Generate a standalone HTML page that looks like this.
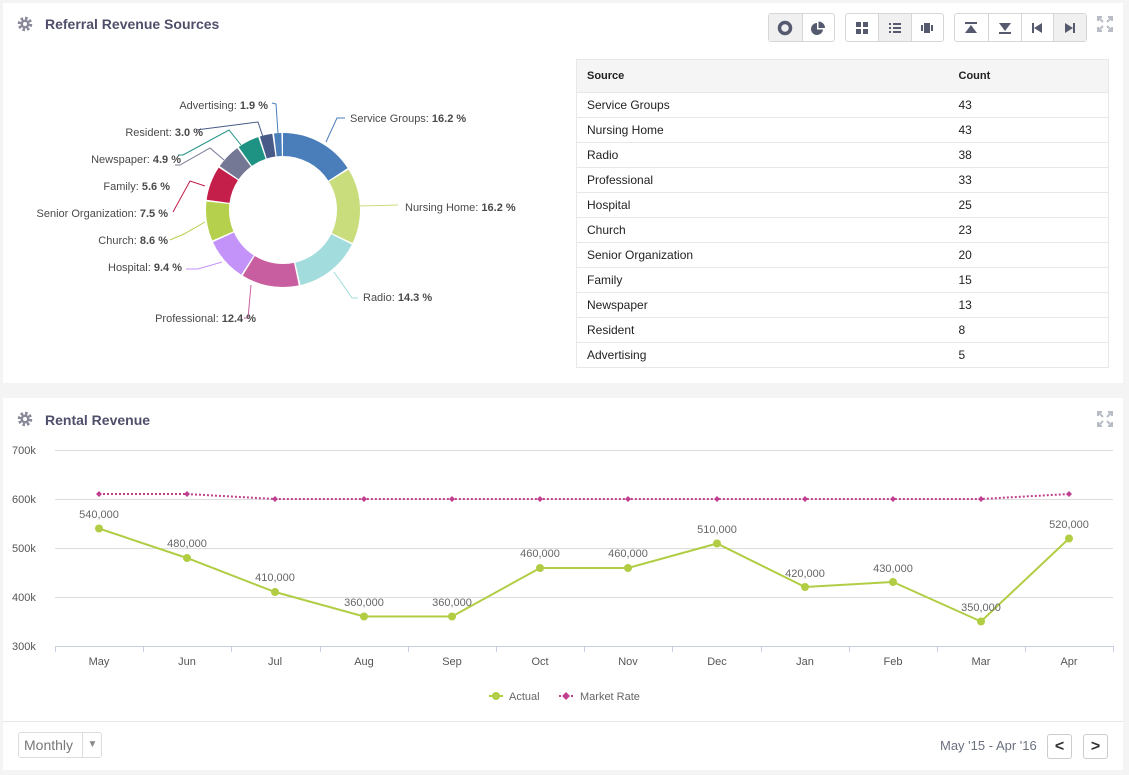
<!DOCTYPE html>
<html><head><meta charset="utf-8"><style>
*{box-sizing:border-box;margin:0;padding:0}
body{width:1129px;height:775px;background:#f4f4f4;font-family:"Liberation Sans",Arial,sans-serif;position:relative;overflow:hidden}
.panel{position:absolute;background:#fff;left:3px;width:1120px}
.title{position:absolute;left:42px;font-size:14px;font-weight:bold;color:#4f4f6b}
.gear{position:absolute;left:14px;width:16px;height:16px}
.btng{position:absolute;top:10px;height:29px;border:1px solid #d6d6d6;border-radius:3px;display:flex;background:#fff}
.btng div{width:33px;border-left:1px solid #d6d6d6;display:flex;align-items:center;justify-content:center}
.btng div:first-child{border-left:none}
.btng .on{background:#f0f0f0}
table{position:absolute;left:576px;top:59px;width:533px;border-collapse:collapse;font-size:12px;color:#222;border:1px solid #e8e8e8}
th{background:#f5f5f5;height:33px;text-align:left;font-size:11px;padding-left:10px;border-bottom:1px solid #e8e8e8}
td{height:25px;padding-left:10px;border-bottom:1px solid #e8e8e8}
</style></head><body>
<div class="panel" style="top:3px;height:380px">
<svg class="gear" style="top:13px" viewBox="0 0 16 16"><circle cx="8" cy="8" r="5.5" fill="none" stroke="#8a8a9a" stroke-width="3.5" stroke-dasharray="2.4 1.9"/><circle cx="8" cy="8" r="4.5" fill="#8a8a9a"/><circle cx="8" cy="8" r="2" fill="#fff"/></svg>
<div class="title" style="top:13px">Referral Revenue Sources</div>
<div class="btng" style="left:765px;width:67px"><div class="on"><svg width="16" height="16"><circle cx="8" cy="8" r="5.5" fill="none" stroke="#555a6e" stroke-width="3.5"/></svg></div><div><svg width="16" height="16"><path d="M8.5 1.5A6.5 6.5 0 0 1 15 8H8.5Z M7 3A6 6 0 1 0 13 9.5H7Z" fill="#555a6e"/></svg></div></div>
<div class="btng" style="left:842px;width:99px"><div><svg width="14" height="14"><rect x="1" y="1" width="5" height="5" fill="#555a6e"/><rect x="8" y="1" width="5" height="5" fill="#555a6e"/><rect x="1" y="8" width="5" height="5" fill="#555a6e"/><rect x="8" y="8" width="5" height="5" fill="#555a6e"/></svg></div><div class="on"><svg width="14" height="14" fill="#555a6e"><rect x="1" y="2" width="2" height="2"/><rect x="5" y="2" width="8" height="2"/><rect x="1" y="6" width="2" height="2"/><rect x="5" y="6" width="8" height="2"/><rect x="1" y="10" width="2" height="2"/><rect x="5" y="10" width="8" height="2"/></svg></div><div><svg width="14" height="14" fill="#555a6e"><rect x="1" y="4" width="2" height="6"/><rect x="4" y="2" width="6" height="10"/><rect x="11" y="4" width="2" height="6"/></svg></div></div>
<div class="btng" style="left:951px;width:133px"><div><svg width="14" height="14" fill="#555a6e"><rect x="1" y="1" width="12" height="2"/><path d="M7 4L13 12H1Z"/></svg></div><div><svg width="14" height="14" fill="#555a6e"><rect x="1" y="11" width="12" height="2"/><path d="M7 10L13 2H1Z"/></svg></div><div><svg width="14" height="14" fill="#555a6e"><rect x="2" y="2" width="2" height="10"/><path d="M4 7L12 2V12Z"/></svg></div><div class="on"><svg width="14" height="14" fill="#555a6e"><rect x="10" y="2" width="2" height="10"/><path d="M10 7L2 2V12Z"/></svg></div></div>
<svg style="position:absolute;left:1094px;top:13px" width="16" height="16" fill="none" stroke="#b8bcc6" stroke-width="2"><path d="M1 5V1H5M11 1H15V5M15 11V15H11M5 15H1V11M2 2L6 6M14 2L10 6M14 14L10 10M2 14L6 10"/></svg>
</div>
<svg style="position:absolute;left:0;top:0" width="570" height="380">
<g transform="rotate(-90 283 210)" fill="none" stroke-width="23">
<circle cx="283" cy="210" r="65.5" stroke="#4a7ebb" stroke-dasharray="65.2 400" stroke-dashoffset="0"/>
<circle cx="283" cy="210" r="65.5" stroke="#c9dd7d" stroke-dasharray="65.2 400" stroke-dashoffset="-66.7"/>
<circle cx="283" cy="210" r="65.5" stroke="#a2dcdc" stroke-dasharray="57.3 400" stroke-dashoffset="-133.3"/>
<circle cx="283" cy="210" r="65.5" stroke="#c85ea0" stroke-dasharray="49.5 400" stroke-dashoffset="-192.2"/>
<circle cx="283" cy="210" r="65.5" stroke="#c493f9" stroke-dasharray="37.2 400" stroke-dashoffset="-243.2"/>
<circle cx="283" cy="210" r="65.5" stroke="#b4d04c" stroke-dasharray="33.9 400" stroke-dashoffset="-281.9"/>
<circle cx="283" cy="210" r="65.5" stroke="#c41e4b" stroke-dasharray="29.4 400" stroke-dashoffset="-317.3"/>
<circle cx="283" cy="210" r="65.5" stroke="#757894" stroke-dasharray="21.5 400" stroke-dashoffset="-348.2"/>
<circle cx="283" cy="210" r="65.5" stroke="#1e9283" stroke-dasharray="18.7 400" stroke-dashoffset="-371.2"/>
<circle cx="283" cy="210" r="65.5" stroke="#475a88" stroke-dasharray="10.8 400" stroke-dashoffset="-391.4"/>
<circle cx="283" cy="210" r="65.5" stroke="#4a7ebb" stroke-dasharray="6.3 400" stroke-dashoffset="-403.7"/>
</g>
<g fill="none" stroke-width="1">
<path d="M326 142L337 118H345" stroke="#4a7ebb"/>
<path d="M360 206L398 205" stroke="#c9dd7d"/>
<path d="M334 272L352 298H358" stroke="#a2dcdc"/>
<path d="M251 285L248 318H244" stroke="#c85ea0"/>
<path d="M222 262L198 269H186" stroke="#c493f9"/>
<path d="M205 222L184 234L170 240" stroke="#b4d04c"/>
<path d="M205 186L190 181L173 212" stroke="#c41e4b"/>
<path d="M224 160L210 148L180 165H175" stroke="#757894"/>
<path d="M241 145L229 130L183 155H178" stroke="#1e9283"/>
<path d="M263 137L258 122L196 130" stroke="#475a88"/>
<path d="M278 133L276 104L272 103" stroke="#4a7ebb"/>
</g>
<g font-size="11" fill="#4a4a4a">
<text x="350" y="122">Service Groups: <tspan font-weight="bold">16.2 %</tspan></text>
<text x="405" y="211">Nursing Home: <tspan font-weight="bold">16.2 %</tspan></text>
<text x="363" y="301">Radio: <tspan font-weight="bold">14.3 %</tspan></text>
<g text-anchor="end">
<text x="256" y="322">Professional: <tspan font-weight="bold">12.4 %</tspan></text>
<text x="182" y="271">Hospital: <tspan font-weight="bold">9.4 %</tspan></text>
<text x="168" y="244">Church: <tspan font-weight="bold">8.6 %</tspan></text>
<text x="168" y="217">Senior Organization: <tspan font-weight="bold">7.5 %</tspan></text>
<text x="170" y="190">Family: <tspan font-weight="bold">5.6 %</tspan></text>
<text x="181" y="163">Newspaper: <tspan font-weight="bold">4.9 %</tspan></text>
<text x="203" y="136">Resident: <tspan font-weight="bold">3.0 %</tspan></text>
<text x="268" y="109">Advertising: <tspan font-weight="bold">1.9 %</tspan></text>
</g></g></svg>
<table>
<tr><th style="width:372px">Source</th><th>Count</th></tr>
<tr><td>Service Groups</td><td>43</td></tr>
<tr><td>Nursing Home</td><td>43</td></tr>
<tr><td>Radio</td><td>38</td></tr>
<tr><td>Professional</td><td>33</td></tr>
<tr><td>Hospital</td><td>25</td></tr>
<tr><td>Church</td><td>23</td></tr>
<tr><td>Senior Organization</td><td>20</td></tr>
<tr><td>Family</td><td>15</td></tr>
<tr><td>Newspaper</td><td>13</td></tr>
<tr><td>Resident</td><td>8</td></tr>
<tr><td>Advertising</td><td>5</td></tr>
</table>

<div class="panel" style="top:398px;height:372px">
<svg class="gear" style="top:13px" viewBox="0 0 16 16"><circle cx="8" cy="8" r="5.5" fill="none" stroke="#8a8a9a" stroke-width="3.5" stroke-dasharray="2.4 1.9"/><circle cx="8" cy="8" r="4.5" fill="#8a8a9a"/><circle cx="8" cy="8" r="2" fill="#fff"/></svg>
<div class="title" style="top:14px">Rental Revenue</div>
<svg style="position:absolute;left:1094px;top:13px" width="16" height="16" fill="none" stroke="#b8bcc6" stroke-width="2"><path d="M1 5V1H5M11 1H15V5M15 11V15H11M5 15H1V11M2 2L6 6M14 2L10 6M14 14L10 10M2 14L6 10"/></svg>
<div style="position:absolute;left:0;top:323px;width:1120px;border-top:1px solid #e6e6e6"></div>
<div style="position:absolute;left:15px;top:334px;width:84px;height:26px;border:1px solid #ddd;border-radius:3px;font-size:14px;color:#777;line-height:24px;padding-left:5px">Monthly<span style="position:absolute;left:63px;top:0;height:24px;border-left:1px solid #ddd;width:20px;text-align:center;font-size:10px;color:#888">▼</span></div>
<div style="position:absolute;left:937px;top:340px;font-size:13px;color:#6a7080">May '15 - Apr '16</div>
<div style="position:absolute;left:1044px;top:336px;width:25px;height:25px;border:1px solid #ccc;border-radius:3px;text-align:center;line-height:23px;font-weight:bold;color:#333">&lt;</div>
<div style="position:absolute;left:1080px;top:336px;width:25px;height:25px;border:1px solid #ccc;border-radius:3px;text-align:center;line-height:23px;font-weight:bold;color:#333">&gt;</div>
</div>
<svg style="position:absolute;left:0;top:440px" width="1129" height="270" font-family="Liberation Sans,Arial,sans-serif">
<g transform="translate(0,-440)">
<g stroke="#dcdcdc"><path d="M55 450.5H1113M55 499.5H1113M55 548.5H1113M55 597.5H1113"/><path d="M55 646.5H1113" stroke="#c8d1e0"/>
<path d="M55.5 646V652M143.5 646V652M231.5 646V652M320.5 646V652M408.5 646V652M496.5 646V652M584.5 646V652M672.5 646V652M761.5 646V652M849.5 646V652M937.5 646V652M1025.5 646V652M1113.5 646V652" stroke="#c8d1e0"/></g>
<g font-size="11" fill="#555"><text x="12" y="454">700k</text><text x="12" y="503">600k</text><text x="12" y="552">500k</text><text x="12" y="601">400k</text><text x="12" y="650">300k</text></g>
<g font-size="11" fill="#555" text-anchor="middle"><text x="99" y="665">May</text><text x="187" y="665">Jun</text><text x="275" y="665">Jul</text><text x="364" y="665">Aug</text><text x="452" y="665">Sep</text><text x="540" y="665">Oct</text><text x="628" y="665">Nov</text><text x="717" y="665">Dec</text><text x="805" y="665">Jan</text><text x="893" y="665">Feb</text><text x="981" y="665">Mar</text><text x="1069" y="665">Apr</text></g>
<polyline fill="none" stroke="#c0408f" stroke-width="2" stroke-dasharray="2 2" points="99,494 187,494 275,499 364,499 452,499 540,499 628,499 717,499 805,499 893,499 981,499 1069,494"/>
<g fill="#c0408f"><path d="M99 491l3 3-3 3-3-3z M187 491l3 3-3 3-3-3z M275 496l3 3-3 3-3-3z M364 496l3 3-3 3-3-3z M452 496l3 3-3 3-3-3z M540 496l3 3-3 3-3-3z M628 496l3 3-3 3-3-3z M717 496l3 3-3 3-3-3z M805 496l3 3-3 3-3-3z M893 496l3 3-3 3-3-3z M981 496l3 3-3 3-3-3z M1069 491l3 3-3 3-3-3z"/></g>
<polyline fill="none" stroke="#b0cd44" stroke-width="2" points="99,528.5 187,558 275,592 364,616.5 452,616.5 540,568 628,568 717,543.5 805,587 893,582 981,621.5 1069,538.5"/>
<g fill="#b0cd44"><circle cx="99" cy="528.5" r="4"/><circle cx="187" cy="558" r="4"/><circle cx="275" cy="592" r="4"/><circle cx="364" cy="616.5" r="4"/><circle cx="452" cy="616.5" r="4"/><circle cx="540" cy="568" r="4"/><circle cx="628" cy="568" r="4"/><circle cx="717" cy="543.5" r="4"/><circle cx="805" cy="587" r="4"/><circle cx="893" cy="582" r="4"/><circle cx="981" cy="621.5" r="4"/><circle cx="1069" cy="538.5" r="4"/></g>
<g font-size="11" fill="#666" text-anchor="middle"><text x="99" y="518">540,000</text><text x="187" y="547">480,000</text><text x="275" y="581">410,000</text><text x="364" y="606">360,000</text><text x="452" y="606">360,000</text><text x="540" y="557">460,000</text><text x="628" y="557">460,000</text><text x="717" y="533">510,000</text><text x="805" y="577">420,000</text><text x="893" y="572">430,000</text><text x="981" y="611">350,000</text><text x="1069" y="528">520,000</text></g>
<path d="M489 696H503" stroke="#b0cd44" stroke-width="2"/><circle cx="496" cy="696" r="4" fill="#b0cd44"/>
<text x="509" y="700" font-size="11" fill="#666">Actual</text>
<path d="M559 696H573" stroke="#c0408f" stroke-width="2" stroke-dasharray="2 2"/><path d="M566 692l4 4-4 4-4-4z" fill="#c0408f"/>
<text x="580" y="700" font-size="11" fill="#666">Market Rate</text>
</g></svg>
</body></html>
